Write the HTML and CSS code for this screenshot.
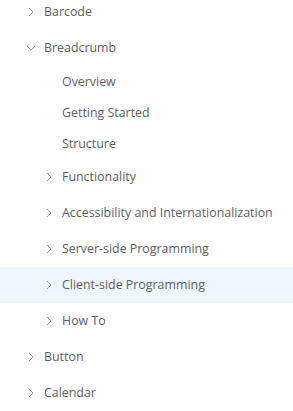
FILE: index.html
```
<!DOCTYPE html>
<html>
<head>
<meta charset="utf-8">
<link rel="stylesheet" href="styles.css">
</head>
<body>
<nav class="tree">
  <div class="row lvl1"><span class="chev"><svg viewBox="0 0 6 10" width="6" height="10"><path d="M1 1 L5 5 L1 9" /></svg></span><span class="label">Barcode</span></div>
  <div class="row lvl1"><span class="chev"><svg class="down" viewBox="0 0 10 6" width="10" height="6"><path d="M1 1 L5 5 L9 1" /></svg></span><span class="label">Breadcrumb</span></div>
  <div class="row leaf"><span class="label">Overview</span></div>
  <div class="row leaf"><span class="label">Getting Started</span></div>
  <div class="row leaf"><span class="label">Structure</span></div>
  <div class="row lvl2"><span class="chev"><svg viewBox="0 0 6 10" width="6" height="10"><path d="M1 1 L5 5 L1 9" /></svg></span><span class="label">Functionality</span></div>
  <div class="row lvl2"><span class="chev"><svg viewBox="0 0 6 10" width="6" height="10"><path d="M1 1 L5 5 L1 9" /></svg></span><span class="label">Accessibility and Internationalization</span></div>
  <div class="row lvl2"><span class="chev"><svg viewBox="0 0 6 10" width="6" height="10"><path d="M1 1 L5 5 L1 9" /></svg></span><span class="label">Server-side Programming</span></div>
  <div class="row lvl2 hover"><span class="chev"><svg viewBox="0 0 6 10" width="6" height="10"><path d="M1 1 L5 5 L1 9" /></svg></span><span class="label">Client-side Programming</span></div>
  <div class="row lvl2"><span class="chev"><svg viewBox="0 0 6 10" width="6" height="10"><path d="M1 1 L5 5 L1 9" /></svg></span><span class="label">How To</span></div>
  <div class="row lvl1"><span class="chev"><svg viewBox="0 0 6 10" width="6" height="10"><path d="M1 1 L5 5 L1 9" /></svg></span><span class="label">Button</span></div>
  <div class="row lvl1"><span class="chev"><svg viewBox="0 0 6 10" width="6" height="10"><path d="M1 1 L5 5 L1 9" /></svg></span><span class="label">Calendar</span></div>
</nav>
</body>
</html>
```
FILE: styles.css
```
html, body {
  margin: 0;
  padding: 0;
  background: #ffffff;
}
body {
  font-family: "Open Sans", "Noto Sans", sans-serif;
  font-size: 12.4px;
  color: #606060;
  overflow: hidden;
}
.tree {
  display: flex;
  flex-direction: column;
  margin-top: -6px;
}
.row {
  display: flex;
  align-items: center;
  height: 36px;
  white-space: nowrap;
}
.row.leaf {
  height: 31px;
  padding-left: 62px;
}
.row.lvl1 {
  padding-left: 28px;
}
.row.lvl2 {
  padding-left: 46px;
}
.row.hover {
  background: #f0f6fd;
}
.chev {
  width: 16px;
  display: flex;
  align-items: center;
  justify-content: flex-start;
}
.chev svg {
  display: block;
}
.chev svg.down {
  margin-left: -2px;
}
.chev path {
  fill: none;
  stroke: #a0a0a0;
  stroke-width: 1;
}
.label {
  line-height: 18px;
}
```
